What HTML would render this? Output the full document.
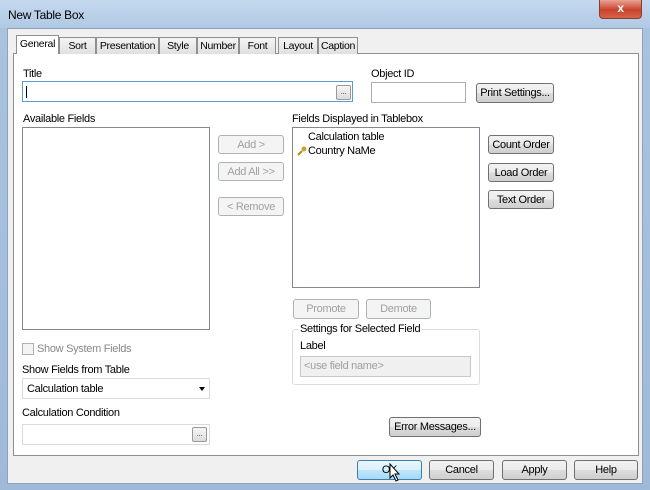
<!DOCTYPE html>
<html><head><style>
*{box-sizing:border-box;margin:0;padding:0}
body{width:650px;height:490px;overflow:hidden;position:relative;font-family:"Liberation Sans",sans-serif;font-size:11px;letter-spacing:-0.3px;color:#000;background:linear-gradient(180deg,#b8cfe6 0,#a9c3de 30px,#9fbad8 100%)}
.a{position:absolute;white-space:nowrap}
.client{position:absolute;left:7px;top:28px;width:636px;height:456px;background:#f0f0f0;border:1px solid #8ea3bb}
.panel{position:absolute;left:13px;top:53px;width:626px;height:403px;background:#fff;border:1px solid #8e8f8f}
.tab{position:absolute;top:37px;height:17px;border:1px solid #8e8f8f;border-bottom:none;background:linear-gradient(#f4f4f4,#e0e0e0);padding-top:2px;text-align:center;font-size:10.5px}
.inp{position:absolute;background:#fff;border:1px solid #abadb3}
.btn{position:absolute;border:1px solid #707070;border-radius:3px;background:linear-gradient(#f2f2f2 0,#ebebeb 50%,#dddddd 51%,#cfcfcf 100%);display:flex;align-items:center;justify-content:center;font-size:11px;color:#000;white-space:nowrap}
.dis{border-color:#adb2b5;background:#f4f4f4;color:#a0a0a0}
.dots{position:absolute;width:15px;height:15px;border:1px solid #9a9a9a;border-radius:2px;background:linear-gradient(#f6f6f6,#dcdcdc);font-size:8px;text-align:center;line-height:12px;color:#444}
</style></head><body>
<div class="a" style="left:0;top:0;width:650px;height:28px;background:linear-gradient(180deg,#c5d9ee,#b0c9e3)"></div>
<div class="a" style="left:8px;top:8px;font-size:12px">New Table Box</div>
<div class="a" style="left:599px;top:0;width:43px;height:19px;border:1px solid #8a3b30;border-top:none;border-radius:0 0 4px 4px;background:linear-gradient(#e8a493,#c9432b 55%,#d4654b);color:#fff;font-weight:bold;text-align:center;font-size:12px;line-height:17px">x</div>
<div class="client"></div>
<div class="panel"></div>
<div class="tab" style="left:16px;top:35px;width:43px;height:19px;background:#fff;z-index:2">General</div>
<div class="tab" style="left:59px;width:37px">Sort</div>
<div class="tab" style="left:96px;width:63px">Presentation</div>
<div class="tab" style="left:159px;width:38px">Style</div>
<div class="tab" style="left:197px;width:42px">Number</div>
<div class="tab" style="left:239px;width:37px">Font</div>
<div class="tab" style="left:278px;width:40px">Layout</div>
<div class="tab" style="left:318px;width:40px">Caption</div>

<div class="a" style="left:23px;top:68px">Title</div>
<div class="inp" style="left:22px;top:81px;width:331px;height:21px;border-color:#5b9bd5"><div class="a" style="left:3px;top:4px;width:1px;height:12px;background:#000"></div></div>
<div class="dots" style="left:336px;top:85px">...</div>
<div class="a" style="left:371px;top:68px">Object ID</div>
<div class="inp" style="left:371px;top:82px;width:95px;height:21px"></div>
<div class="btn" style="left:476px;top:83px;width:78px;height:20px">Print Settings...</div>

<div class="a" style="left:23px;top:113px">Available Fields</div>
<div class="inp" style="left:22px;top:127px;width:188px;height:203px;border-color:#828790"></div>
<div class="btn dis" style="left:218px;top:135px;width:66px;height:19px">Add &gt;</div>
<div class="btn dis" style="left:218px;top:162px;width:66px;height:19px">Add All &gt;&gt;</div>
<div class="btn dis" style="left:218px;top:197px;width:66px;height:19px">&lt; Remove</div>

<div class="a" style="left:292px;top:113px">Fields Displayed in Tablebox</div>
<div class="inp" style="left:292px;top:127px;width:188px;height:161px;border-color:#828790">
<div class="a" style="left:15px;top:3px">Calculation table</div>
<div class="a" style="left:4px;top:18px;width:9px;height:9px"><svg width="10" height="10"><circle cx="7" cy="3" r="2.5" fill="#c9a135"/><path d="M5 5 L1 9" stroke="#b38a20" stroke-width="2"/></svg></div>
<div class="a" style="left:15px;top:17px">Country NaMe</div>
</div>
<div class="btn" style="left:488px;top:135px;width:66px;height:19px">Count Order</div>
<div class="btn" style="left:488px;top:163px;width:66px;height:19px">Load Order</div>
<div class="btn" style="left:488px;top:190px;width:66px;height:19px">Text Order</div>
<div class="btn dis" style="left:293px;top:299px;width:66px;height:20px">Promote</div>
<div class="btn dis" style="left:366px;top:299px;width:65px;height:20px">Demote</div>

<div class="a" style="left:292px;top:329px;width:188px;height:56px;border:1px solid #dcdcdc;border-radius:3px"></div>
<div class="a" style="left:298px;top:323px;background:#fff;padding:0 2px">Settings for Selected Field</div>
<div class="a" style="left:300px;top:340px">Label</div>
<div class="inp" style="left:300px;top:356px;width:171px;height:21px;background:#f0f0f0;border-color:#c8c8c8;color:#a0a0a0;padding:3px 0 0 3px">&lt;use field name&gt;</div>

<div class="a" style="left:22px;top:343px;width:12px;height:12px;border:1px solid #b0b0b0;background:#f4f4f4"></div>
<div class="a" style="left:37px;top:343px;color:#888">Show System Fields</div>
<div class="a" style="left:22px;top:364px">Show Fields from Table</div>
<div class="inp" style="left:22px;top:378px;width:188px;height:21px;border-color:#dadada;padding:4px 0 0 4px">Calculation table<div class="a" style="left:176px;top:8px;width:0;height:0;border-left:3px solid transparent;border-right:3px solid transparent;border-top:4px solid #000"></div></div>
<div class="a" style="left:22px;top:407px">Calculation Condition</div>
<div class="inp" style="left:22px;top:424px;width:188px;height:21px;border-color:#dadada"></div>
<div class="dots" style="left:192px;top:427px">...</div>
<div class="btn" style="left:389px;top:417px;width:92px;height:20px">Error Messages...</div>

<div class="btn" style="left:357px;top:460px;width:65px;height:20px;border-color:#3c7fb1;background:linear-gradient(#eaf6fd,#d9f0fc 50%,#bee6fd 51%,#a7d9f5)">OK</div>
<svg class="a" style="left:389px;top:463px" width="12" height="20"><path d="M1 1 L1 15 L4 12 L7 18 L9 17 L6 11 L10 11 Z" fill="#fff" stroke="#000" stroke-width="1"/></svg>
<div class="btn" style="left:429px;top:460px;width:65px;height:20px">Cancel</div>
<div class="btn" style="left:502px;top:460px;width:65px;height:20px">Apply</div>
<div class="btn" style="left:574px;top:460px;width:64px;height:20px">Help</div>
</body></html>
